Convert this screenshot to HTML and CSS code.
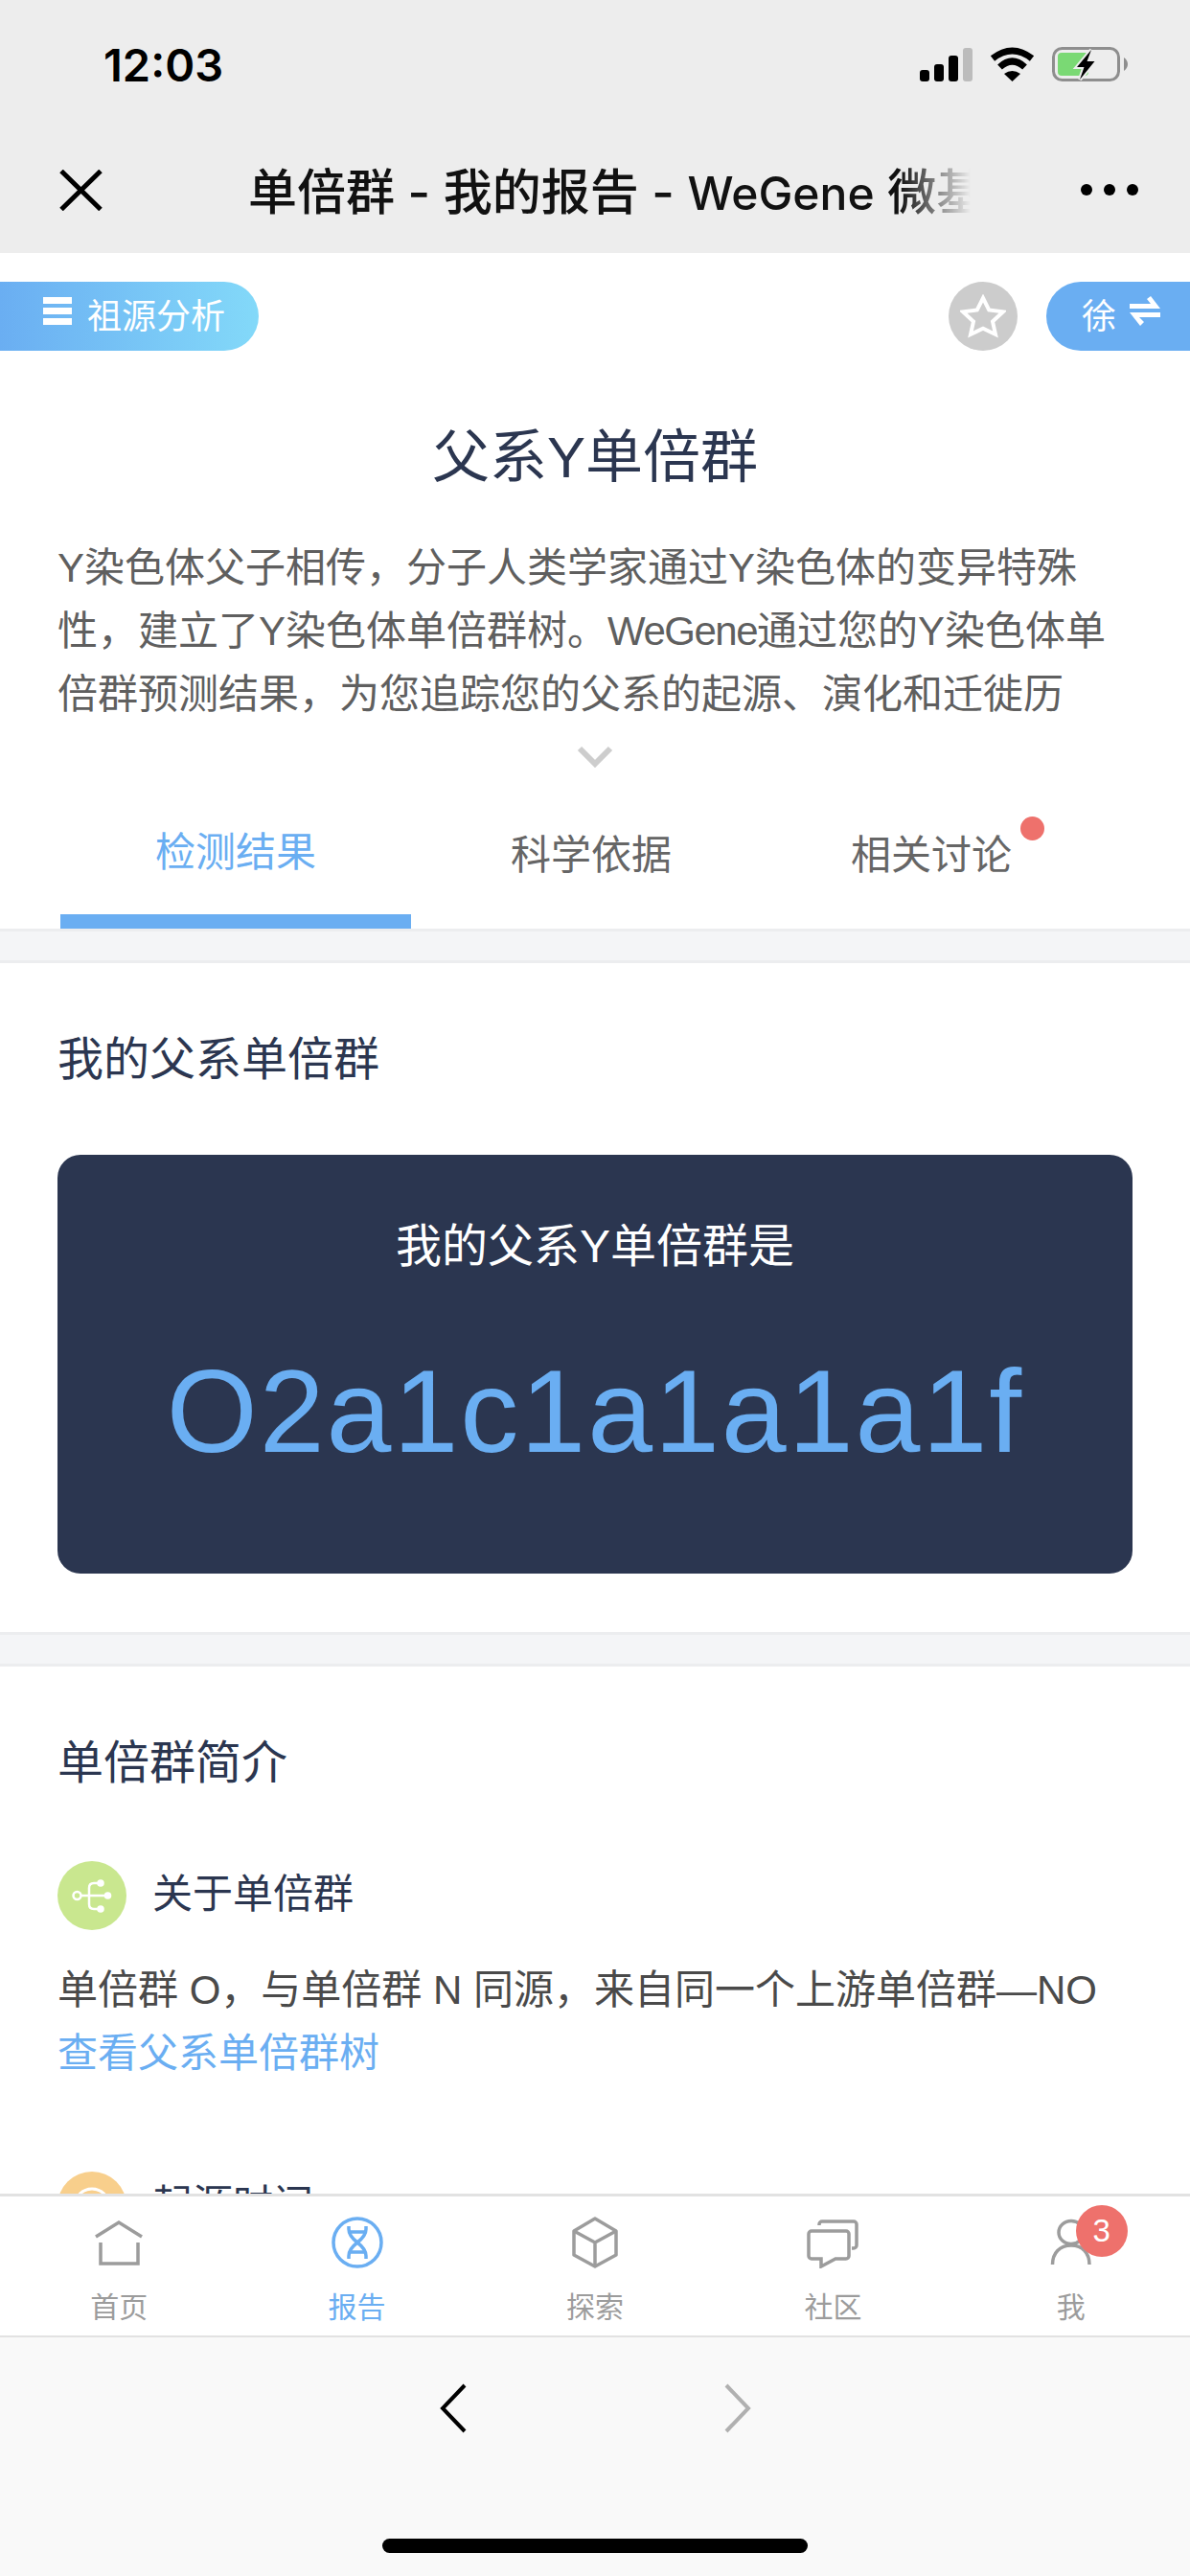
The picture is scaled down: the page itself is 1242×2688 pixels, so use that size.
FILE: index.html
```html
<!DOCTYPE html>
<html lang="zh-CN">
<head>
  <meta charset="utf-8">
  <title>单倍群 - 我的报告 - WeGene 微基因</title>
  <link rel="stylesheet" href="styles.css">
</head>
<body>
  <div class="phone">
    <header class="top-bar">
      <div class="status">
        <span class="time">12:03</span>
        <div class="status-icons">
          <svg class="signal" width="55" height="35" viewBox="0 0 55 35">
            <rect x="0" y="23" width="10" height="12" rx="3"/>
            <rect x="15" y="17" width="10" height="18" rx="3"/>
            <rect x="30" y="8" width="10" height="27" rx="3"/>
            <rect x="45" y="0" width="10" height="35" rx="3" fill="#bcbcbc"/>
          </svg>
          <svg class="wifi" width="49" height="36" viewBox="0 0 49 36">
            <path d="M4 12 Q24.5 -4 45 12" fill="none" stroke="#000" stroke-width="7"/>
            <path d="M11.5 21 Q24.5 9 37.5 21" fill="none" stroke="#000" stroke-width="7"/>
            <path d="M16 28 Q24.5 22 33 28 L24.5 36 Z"/>
          </svg>
          <svg class="battery" width="79" height="36" viewBox="0 0 79 36">
            <rect x="1.5" y="1.5" width="68" height="33" rx="9" fill="none" stroke="#8e8e8e" stroke-width="3"/>
            <path d="M75 11 Q79 14 79 18 Q79 22 75 25 Z" fill="#8e8e8e"/>
            <rect x="6" y="6" width="32" height="24" rx="4" fill="#7ad974"/>
            <path d="M41 3 L26 21 H33.5 L29 34 L44.5 15 H36.5 Z" stroke="#ededed" stroke-width="4" paint-order="stroke"/>
          </svg>
        </div>
      </div>
      <nav class="nav">
        <svg class="nav-close" width="45" height="43" viewBox="0 0 45 43">
          <path d="M2 1.5 L43 41.5 M43 1.5 L2 41.5" fill="none" stroke="#000" stroke-width="5"/>
        </svg>
        <div class="nav-title">单倍群 - 我的报告 - <span class="nav-brand">WeGene</span> 微基因</div>
        <div class="nav-more"><i></i><i></i><i></i></div>
      </nav>
    </header>

    <main class="content">
      <div class="toolbar">
        <div class="pill-menu">
          <span class="burger"><i></i><i></i><i></i></span>
          <span class="pill-text">祖源分析</span>
        </div>
        <div class="star-btn">
          <svg width="48" height="46" viewBox="0 0 48 46">
            <polygon points="24,4 30.2,16.5 45,18.3 34,28.5 37,42 24,35.8 11,42 14,28.5 3,18.3 17.8,16.5" fill="none" stroke="#fff" stroke-width="4"/>
          </svg>
        </div>
        <div class="pill-user">
          <span class="pill-text">徐</span>
          <svg class="swap" width="34" height="32" viewBox="0 0 34 32">
            <path d="M1 8 H23 L19 3 L23 0 L33 13 H1 Z M33 17 H1 L12 31 L16 27 L11 22 H33 Z" fill="#fff"/>
          </svg>
        </div>
      </div>

      <h1 class="report-title">父系Y单倍群</h1>
      <div class="intro">
        <div>Y染色体父子相传，分子人类学家通过Y染色体的变异特殊</div>
        <div>性，建立了Y染色体单倍群树。<span class="brand">WeGene</span>通过您的Y染色体单</div>
        <div>倍群预测结果，为您追踪您的父系的起源、演化和迁徙历</div>
      </div>
      <svg class="more-arrow" width="38" height="23" viewBox="0 0 38 23">
        <path d="M3 3 L19 19 L35 3" fill="none" stroke="#cdcdcd" stroke-width="6"/>
      </svg>

      <div class="tabs">
        <div class="tab active">检测结果</div>
        <div class="tab">科学依据</div>
        <div class="tab"><span class="tab-label">相关讨论<i class="dot"></i></span></div>
      </div>
      <div class="band"></div>

      <section class="section result">
        <h2>我的父系单倍群</h2>
        <div class="result-card">
          <div class="result-label">我的父系Y单倍群是</div>
          <div class="result-code">O2a1c1a1a1a1f</div>
        </div>
      </section>
      <div class="band"></div>

      <section class="section">
        <h2>单倍群简介</h2>
        <div class="item">
          <div class="item-head">
            <div class="item-icon green">
              <svg width="72" height="72" viewBox="0 0 72 72">
                <path d="M24 36 H50 M45 23 H38 Q33 23 33 28 V45 Q33 50 38 50 H45" fill="none" stroke="#fff" stroke-width="2.5"/>
                <circle cx="20.5" cy="36" r="4" fill="none" stroke="#fff" stroke-width="2.5"/>
                <circle cx="45" cy="23" r="3.8" fill="#fff"/>
                <circle cx="52.5" cy="36" r="3.8" fill="#fff"/>
                <circle cx="45" cy="50" r="3.8" fill="#fff"/>
              </svg>
            </div>
            <span class="item-name">关于单倍群</span>
          </div>
          <div class="item-text">单倍群 O，与单倍群 N 同源，来自同一个上游单倍群—NO</div>
          <a class="item-link">查看父系单倍群树</a>
        </div>
        <div class="item">
          <div class="item-head">
            <div class="item-icon orange">
              <svg width="72" height="72" viewBox="0 0 72 72">
                <circle cx="36" cy="36" r="18" fill="none" stroke="#fff" stroke-width="3"/>
                <path d="M36 25 V37 H44" fill="none" stroke="#fff" stroke-width="3"/>
              </svg>
            </div>
            <span class="item-name">起源时间</span>
          </div>
        </div>
      </section>
    </main>

    <footer class="tabbar">
      <div class="tabbar-item">
        <span class="tabbar-icon">
          <svg width="54" height="54" viewBox="0 0 54 54" fill="none" stroke="#9c9c9c" stroke-width="3.5">
            <path d="M3 21 L27 6 L51 21"/>
            <path d="M8 27 V49 H47 V27"/>
          </svg>
        </span>
        <span>首页</span>
      </div>
      <div class="tabbar-item current">
        <span class="tabbar-icon">
          <svg width="54" height="54" viewBox="0 0 54 54" fill="none" stroke="#6aaef2" stroke-width="3.5">
            <circle cx="27" cy="27" r="25"/>
            <path d="M18 10 V13 Q18 20 27 27 Q36 34 36 41 V44"/>
            <path d="M36 10 V13 Q36 20 27 27 Q18 34 18 41 V44"/>
            <path d="M19 16 H35 M19 37 H35"/>
          </svg>
        </span>
        <span>报告</span>
      </div>
      <div class="tabbar-item">
        <span class="tabbar-icon">
          <svg width="54" height="54" viewBox="0 0 54 54" fill="none" stroke="#9c9c9c" stroke-width="3.5" stroke-linejoin="round">
            <path d="M27 2 L49 15 V40 L27 52 L5 40 V15 Z"/>
            <path d="M5 15 L27 27 L49 15 M27 27 V52"/>
          </svg>
        </span>
        <span>探索</span>
      </div>
      <div class="tabbar-item">
        <span class="tabbar-icon">
          <svg width="54" height="54" viewBox="0 0 54 54" fill="none" stroke="#9c9c9c" stroke-width="3.5">
            <path d="M5 15 H41 a3 3 0 0 1 3 3 V41 a3 3 0 0 1 -3 3 H30 L15 52 V44 H5 a3 3 0 0 1 -3 -3 V18 a3 3 0 0 1 3 -3 Z"/>
            <path d="M13 9 V8 a3 3 0 0 1 3 -3 H49 a3 3 0 0 1 3 3 V30 a3 3 0 0 1 -3 3 H47"/>
          </svg>
        </span>
        <span>社区</span>
      </div>
      <div class="tabbar-item">
        <span class="tabbar-icon">
          <svg width="54" height="54" viewBox="0 0 54 54" fill="none" stroke="#9c9c9c" stroke-width="3.5">
            <ellipse cx="27" cy="16.5" rx="13" ry="12"/>
            <path d="M7.5 50 C7.5 38 15 30 27 30 C39 30 46 38 46 50"/>
          </svg>
          <b class="badge">3</b>
        </span>
        <span>我</span>
      </div>
    </footer>

    <div class="browser-bar">
      <div class="browser-arrows">
        <svg width="28" height="52" viewBox="0 0 28 52">
          <path d="M26 2 L3 26 L26 50" fill="none" stroke="#000" stroke-width="4"/>
        </svg>
        <svg width="28" height="52" viewBox="0 0 28 52">
          <path d="M2 2 L25 26 L2 50" fill="none" stroke="#b0b0b0" stroke-width="4"/>
        </svg>
      </div>
      <div class="home-bar"></div>
    </div>
  </div>
</body>
</html>
```

FILE: styles.css
```css
/* Basic Styling */
* {
  box-sizing: border-box;
}
body {
  margin: 0;
  font-family: "Liberation Sans", "Noto Sans CJK SC", sans-serif;
  background-color: #fff;
}
h1, h2 {
  margin: 0;
  font-weight: 400;
}
i {
  font-style: normal;
}
.phone {
  width: 1242px;
  height: 2688px;
  display: flex;
  flex-direction: column;
  overflow: hidden;
}

/* Status bar and nav */
.top-bar {
  height: 264px;
  flex: none;
  background-color: #ededed;
}
.status {
  height: 134px;
  padding: 49px 65px 0 108px;
  display: flex;
  align-items: flex-start;
}
.time {
  font-family: Inter, "Liberation Sans", sans-serif;
  font-size: 47px;
  line-height: 38px;
  font-weight: 600;
  color: #000;
}
.status-icons {
  margin-left: auto;
  display: flex;
  align-items: flex-start;
}
.signal {
  margin-top: 1px;
}
.wifi {
  margin-left: 17px;
}
.battery {
  margin-left: 17px;
}
.nav {
  height: 128px;
  display: flex;
  align-items: center;
  padding-left: 62px;
}
.nav-close {
  flex: none;
}
.nav-title {
  width: 754px;
  margin-left: 152px;
  padding-bottom: 2px;
  font-family: Inter, "Noto Sans CJK SC", sans-serif;
  font-size: 51px;
  font-weight: 500;
  color: #111;
  white-space: nowrap;
  overflow: hidden;
  -webkit-mask-image: linear-gradient(to right, #000 680px, transparent 754px);
  mask-image: linear-gradient(to right, #000 680px, transparent 754px);
}
.nav-brand {
  font-size: 48px;
}
.nav-more {
  margin-left: 115px;
  display: flex;
  gap: 12px;
}
.nav-more i {
  width: 12px;
  height: 12px;
  border-radius: 50%;
  background-color: #000;
}

/* Page content */
.content {
  flex: none;
  height: 2025px;
  overflow: hidden;
  padding-top: 30px;
}
.toolbar {
  display: flex;
  align-items: center;
  height: 72px;
}
.pill-menu {
  width: 270px;
  height: 72px;
  padding-left: 45px;
  display: flex;
  align-items: center;
  gap: 16px;
  font-size: 36px;
  color: #fff;
  border-radius: 0 36px 36px 0;
  background: linear-gradient(to right, #6aaef2, #83d9f9);
}
.pill-text {
  margin-top: -6px;
}
.burger {
  width: 30px;
  display: flex;
  flex-direction: column;
  gap: 4px;
  margin-top: -11px;
}
.burger i {
  height: 7px;
  background-color: #fff;
}
.star-btn {
  width: 72px;
  height: 72px;
  margin-left: auto;
  display: flex;
  align-items: center;
  justify-content: center;
  border-radius: 50%;
  background-color: #ccc;
}
.pill-user {
  width: 150px;
  height: 72px;
  margin-left: 30px;
  padding-left: 37px;
  display: flex;
  align-items: center;
  gap: 13px;
  font-size: 36px;
  color: #fff;
  border-radius: 36px 0 0 36px;
  background-color: #6aaef2;
}
.swap {
  margin-top: -10px;
}
.report-title {
  margin-top: 70px;
  font-size: 60px;
  line-height: 84px;
  text-align: center;
  color: #2b3650;
}
.intro {
  margin-top: 40px;
  padding: 0 60px;
  font-size: 42px;
  line-height: 66px;
  color: #5f5f5f;
  white-space: nowrap;
}
.brand {
  letter-spacing: -1.5px;
}
.more-arrow {
  display: block;
  margin: 20px 0 0 602px;
}

/* Tabs */
.tabs {
  display: grid;
  grid-template-columns: 366px 376px 334px;
  height: 168px;
  padding-left: 63px;
}
.tab {
  padding-top: 64px;
  font-size: 42px;
  line-height: 56px;
  text-align: center;
  color: #666;
}
.tab.active {
  padding-top: 61px;
  color: #6aaef2;
  border-bottom: 15px solid #6aaef2;
}
.tab-label {
  position: relative;
  display: inline-block;
}
.dot {
  position: absolute;
  top: -13px;
  right: -34px;
  width: 25px;
  height: 25px;
  border-radius: 50%;
  background-color: #ee716c;
}
.band {
  height: 36px;
  background-color: #f4f5f7;
  border-top: 3px solid #ecedef;
  border-bottom: 3px solid #ecedef;
}

/* Sections */
.section {
  padding: 67px 60px 0;
}
.section h2 {
  font-size: 48px;
  line-height: 68px;
  color: #2b3650;
}
.result {
  padding-bottom: 61px;
}
.result-card {
  margin-top: 65px;
  padding: 61px 0 99px;
  text-align: center;
  border-radius: 24px;
  background-color: #2b3650;
}
.result-label {
  font-size: 48px;
  line-height: 70px;
  color: #fff;
}
.result-code {
  margin-top: 67px;
  font-size: 122px;
  line-height: 140px;
  letter-spacing: 2px;
  color: #6aaef2;
}
.item {
  margin-top: 68px;
}
.item + .item {
  margin-top: 90px;
}
.item-head {
  display: flex;
  align-items: center;
  gap: 27px;
  font-size: 42px;
  color: #2b3650;
}
.item-name {
  margin-top: -12px;
}
.item-icon {
  width: 72px;
  height: 72px;
  flex: none;
  border-radius: 50%;
}
.item-icon svg {
  display: block;
}
.green {
  background-color: #c9e78f;
}
.orange {
  background-color: #f8cf8c;
}
.item-text {
  margin-top: 30px;
  font-size: 42px;
  line-height: 66px;
  color: #4a4a4a;
  white-space: nowrap;
}
.item-link {
  display: block;
  font-size: 42px;
  line-height: 66px;
  color: #6aaef2;
}

/* Bottom tab bar */
.tabbar {
  height: 150px;
  flex: none;
  display: grid;
  grid-template-columns: repeat(5, 1fr);
  padding-top: 21px;
  background-color: #fff;
  border-top: 3px solid #e2e2e2;
  border-bottom: 2px solid #e2e2e2;
}
.tabbar-item {
  display: flex;
  flex-direction: column;
  align-items: center;
  font-size: 30px;
  line-height: 40px;
  color: #9c9c9c;
}
.tabbar-item.current {
  color: #6aaef2;
}
.tabbar-icon {
  position: relative;
  width: 54px;
  height: 54px;
  margin-bottom: 21px;
}
.tabbar-icon svg {
  display: block;
}
.badge {
  position: absolute;
  top: -12px;
  left: 32px;
  width: 54px;
  height: 54px;
  font-size: 33px;
  font-weight: 400;
  line-height: 54px;
  text-align: center;
  color: #fff;
  border-radius: 50%;
  background-color: #ee716c;
}

/* Browser bar */
.browser-bar {
  flex: none;
  height: 249px;
  padding-top: 48px;
  background-color: #f9f9f9;
}
.browser-arrows {
  display: flex;
  justify-content: center;
  gap: 269px;
}
.browser-arrows svg {
  display: block;
}
.home-bar {
  width: 444px;
  height: 15px;
  margin: 110px 0 0 399px;
  border-radius: 8px;
  background-color: #000;
}
```
